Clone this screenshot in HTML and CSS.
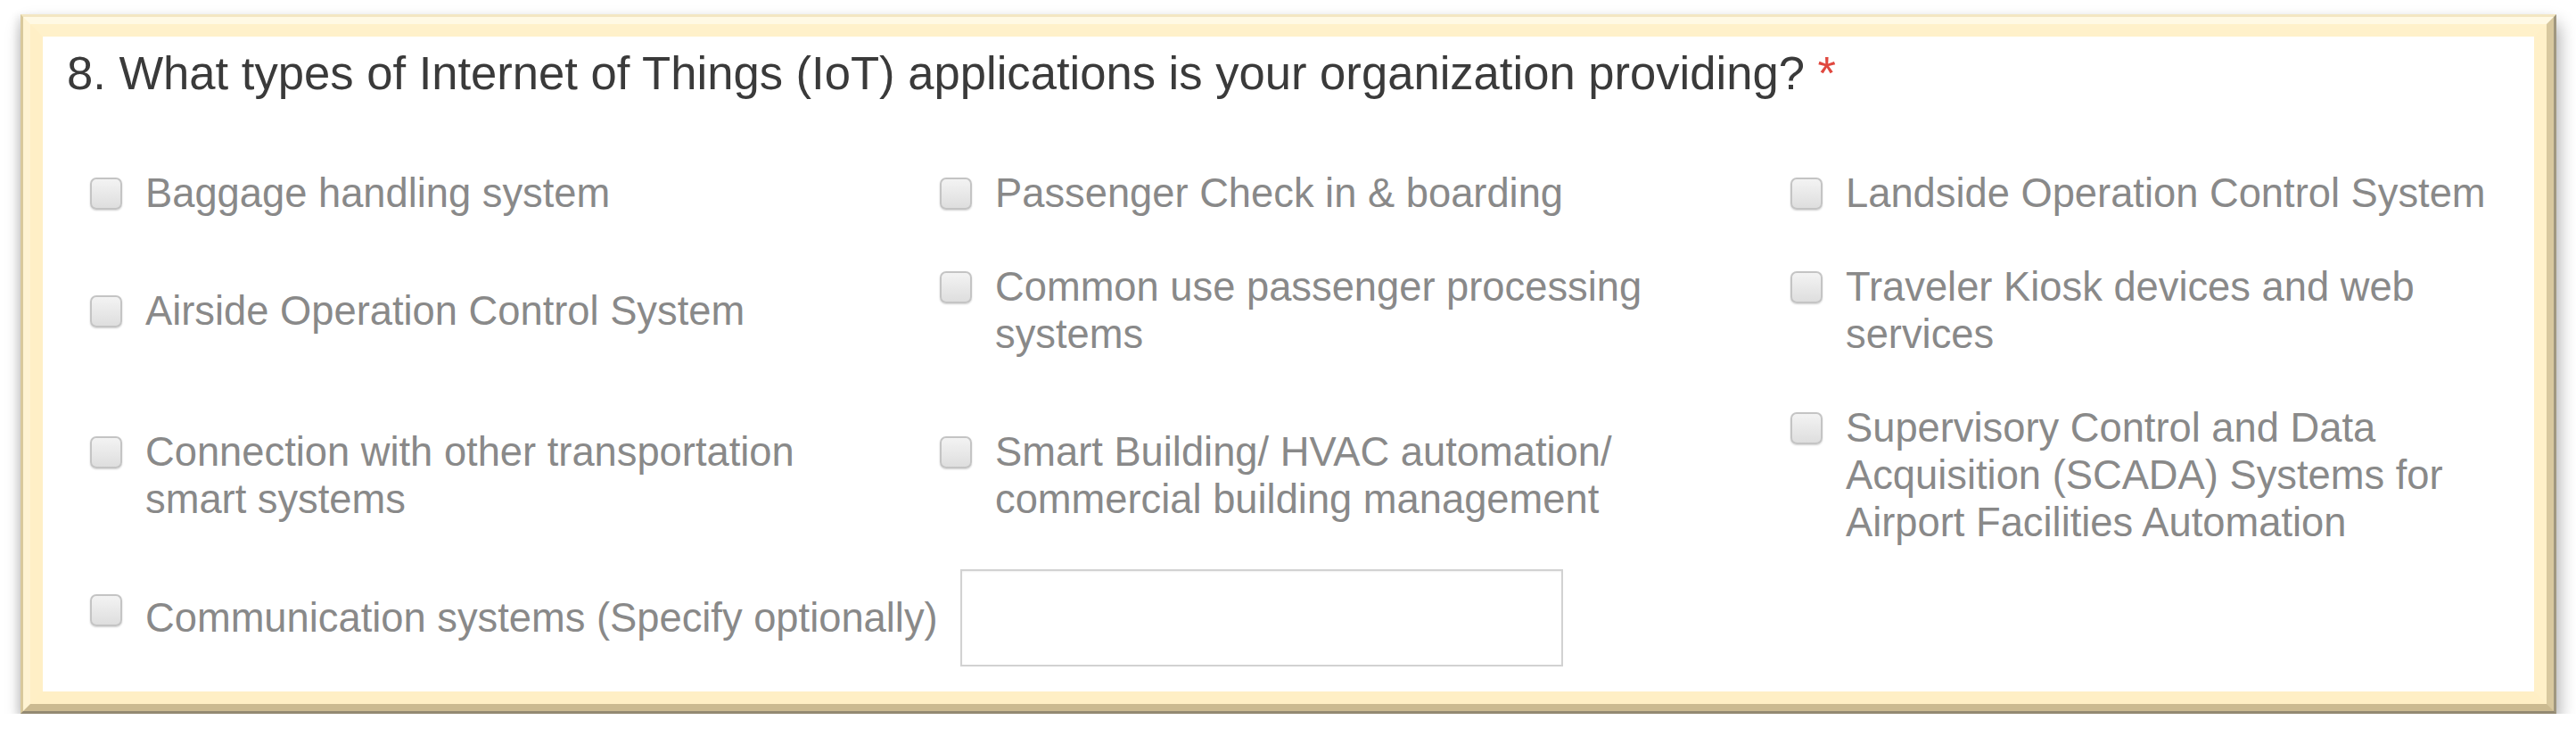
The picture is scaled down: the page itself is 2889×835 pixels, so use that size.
FILE: index.html
```html
<!DOCTYPE html>
<html lang="en">
<head>
<meta charset="utf-8">
<title>IoT applications question</title>
<link rel="stylesheet" href="styles.css">
</head>
<body>
<div class="page">
  <div class="frame">
    <div class="bevel">
      <div class="inner-edge">
        <div class="panel">
          <h2 class="question">8. What types of Internet of Things (IoT) applications is your organization providing? <span class="req">*</span></h2>
          <div class="options">
            <label class="opt"><span class="cb"></span><span class="lbl">Baggage handling system</span></label>
            <label class="opt"><span class="cb"></span><span class="lbl">Passenger Check in &amp; boarding</span></label>
            <label class="opt"><span class="cb"></span><span class="lbl">Landside Operation Control System</span></label>
            <label class="opt"><span class="cb"></span><span class="lbl">Airside Operation Control System</span></label>
            <label class="opt"><span class="cb"></span><span class="lbl">Common use passenger processing systems</span></label>
            <label class="opt"><span class="cb"></span><span class="lbl">Traveler Kiosk devices and web services</span></label>
            <label class="opt"><span class="cb"></span><span class="lbl">Connection with other transportation smart systems</span></label>
            <label class="opt"><span class="cb"></span><span class="lbl">Smart Building/ HVAC automation/ commercial building management</span></label>
            <label class="opt"><span class="cb"></span><span class="lbl">Supervisory Control and Data Acquisition (SCADA) Systems for Airport Facilities Automation</span></label>
          </div>
          <div class="other">
            <span class="cb cb-other"></span>
            <span class="lbl lbl-other">Communication systems (Specify optionally)</span>
            <span class="field"></span>
          </div>
        </div>
      </div>
    </div>
  </div>
</div>
</body>
</html>
```
FILE: styles.css
```css
html, body {
  margin: 0;
  padding: 0;
  background: #ffffff;
}

.page {
  padding: 16px 0 0 23px;
}

.frame {
  width: 2844px;
  box-sizing: border-box;
  border-style: solid;
  border-width: 3px;
  border-top-color: #f3e6c2;
  border-left-color: #d9c99c;
  border-right-color: #a0977f;
  border-bottom-color: #938972;
  box-shadow: 3px 11px 18px rgba(0, 0, 0, 0.32), -4px 2px 8px rgba(0, 0, 0, 0.08);
}

.bevel {
  border-style: solid;
  border-width: 8px;
  border-top-color: #fff9e4;
  border-left-color: #fff3d2;
  border-right-color: #d8c89f;
  border-bottom-color: #cbba91;
}

.inner-edge {
  border-style: solid;
  border-width: 14px;
  border-top-color: #fff1ca;
  border-left-color: #ffefc6;
  border-right-color: #fff0c8;
  border-bottom-color: #ffefc5;
}

.panel {
  background: #ffffff;
  padding: 10px 20px 28px 27px;
  font-family: "Liberation Sans", Arial, sans-serif;
}

.question {
  margin: 0;
  font-size: 52.6px;
  line-height: 62px;
  font-weight: normal;
  color: #3a3a3a;
  white-space: nowrap;
}

.req {
  color: #e0483f;
}

.options {
  margin: 77px 0 0 26px;
  display: grid;
  grid-template-columns: 953px 954px 1fr;
  row-gap: 52px;
  align-items: center;
}

.opt {
  display: flex;
  align-items: flex-start;
  gap: 26px;
}

.cb {
  flex: none;
  width: 32px;
  height: 32px;
  margin-top: 9px;
  border: 2px solid #c4c4c4;
  border-radius: 7px;
  background: linear-gradient(#f3f3f3, #dedede);
  box-shadow: 0 1px 2px rgba(0, 0, 0, 0.18);
}

.lbl {
  max-width: 770px;
  font-size: 45.3px;
  line-height: 53px;
  color: #898989;
}

.other {
  margin: 26px 0 0 26px;
  display: flex;
  align-items: center;
}

.cb-other {
  margin-top: 0;
  margin-bottom: 18px;
}

.lbl-other {
  max-width: none;
  margin-left: 26px;
  white-space: nowrap;
}

.field {
  flex: none;
  width: 672px;
  height: 105px;
  margin-left: 25px;
  border: 2px solid #d2d2d2;
  background: #ffffff;
  box-shadow: inset 0 1px 2px rgba(0, 0, 0, 0.06);
}
```
